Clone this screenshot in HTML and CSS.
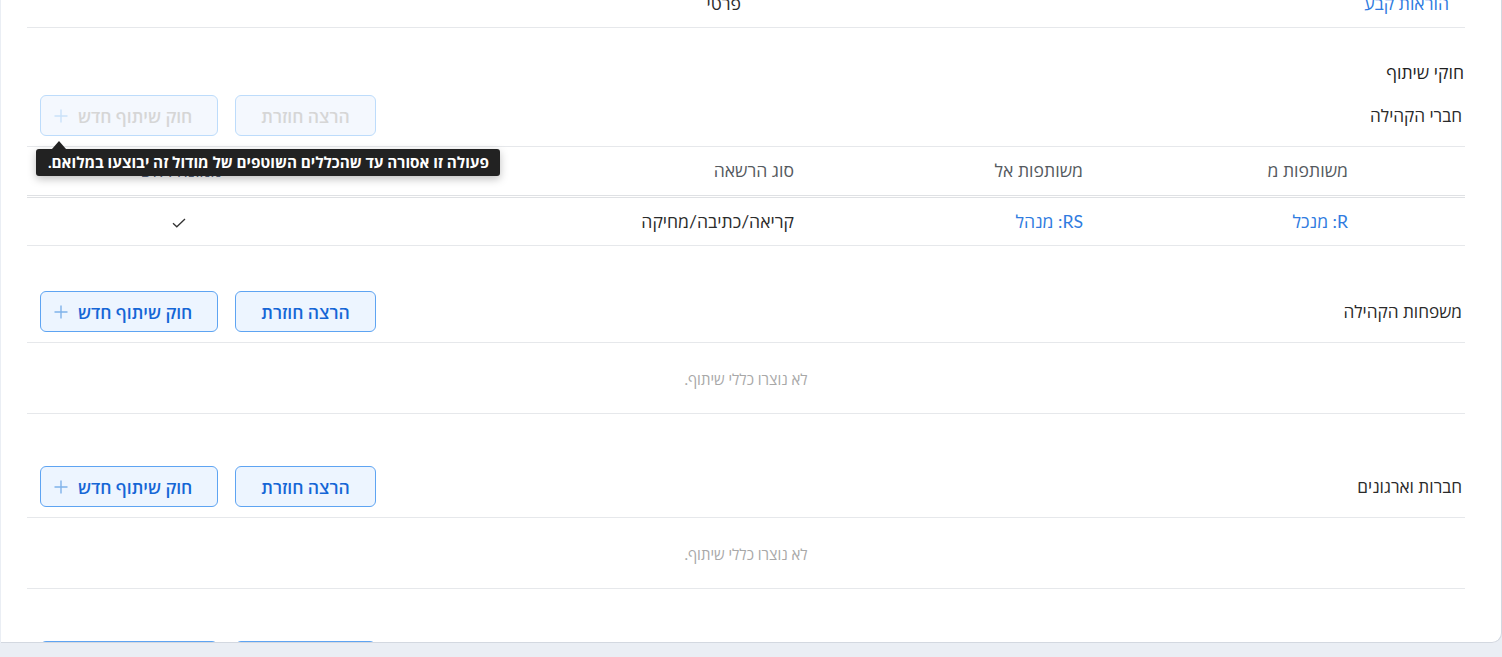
FILE: index.html
```html
<!DOCTYPE html>
<html lang="he" dir="rtl">
<head>
<meta charset="utf-8">
<title>חוקי שיתוף</title>
<link rel="stylesheet" href="styles.css">
</head>
<body>
<div class="card">
  <div class="top-row">
    <div class="top-cell link">הוראות קבע</div>
    <div class="top-cell">פרטי</div>
  </div>

  <h2 class="title">חוקי שיתוף</h2>

  <div class="section-head section-head--first">
    <div class="label">חברי הקהילה</div>
    <div class="actions">
      <button class="btn btn--disabled">הרצה חוזרת</button>
      <div class="btn-wrap">
        <button class="btn btn--add btn--disabled">חוק שיתוף חדש
          <svg class="plus" viewBox="0 0 14 14" width="14" height="14"><path d="M7 0.5V13.5M0.5 7H13.5" fill="none" stroke="currentColor" stroke-width="1.4"/></svg>
        </button>
        <div class="tooltip">פעולה זו אסורה עד שהכללים השוטפים של מודול זה יבוצעו במלואם.</div>
      </div>
    </div>
  </div>

  <div class="table">
    <div class="thead">
      <div class="cell">משותפות מ</div>
      <div class="cell">משותפות אל</div>
      <div class="cell">סוג הרשאה</div>
      <div class="cell cell--center">ממונה ראשי</div>
    </div>
    <div class="trow">
      <div class="cell link">R: מנכל</div>
      <div class="cell link">RS: מנהל</div>
      <div class="cell">קריאה/כתיבה/מחיקה</div>
      <div class="cell cell--center">
        <svg class="check" viewBox="0 0 14 10" width="14" height="10"><path d="M1 5.2L4.8 8.8L13 1" fill="none" stroke="#333" stroke-width="1.3"/></svg>
      </div>
    </div>
  </div>

  <div class="section-head section-head--mid">
    <div class="label">משפחות הקהילה</div>
    <div class="actions">
      <button class="btn">הרצה חוזרת</button>
      <button class="btn btn--add">חוק שיתוף חדש
        <svg class="plus" viewBox="0 0 14 14" width="14" height="14"><path d="M7 0.5V13.5M0.5 7H13.5" fill="none" stroke="currentColor" stroke-width="1.4"/></svg>
      </button>
    </div>
  </div>
  <div class="empty">לא נוצרו כללי שיתוף.</div>

  <div class="section-head">
    <div class="label">חברות וארגונים</div>
    <div class="actions">
      <button class="btn">הרצה חוזרת</button>
      <button class="btn btn--add">חוק שיתוף חדש
        <svg class="plus" viewBox="0 0 14 14" width="14" height="14"><path d="M7 0.5V13.5M0.5 7H13.5" fill="none" stroke="currentColor" stroke-width="1.4"/></svg>
      </button>
    </div>
  </div>
  <div class="empty">לא נוצרו כללי שיתוף.</div>

  <div class="section-head">
    <div class="label">ספקים</div>
    <div class="actions">
      <button class="btn">הרצה חוזרת</button>
      <button class="btn btn--add">חוק שיתוף חדש
        <svg class="plus" viewBox="0 0 14 14" width="14" height="14"><path d="M7 0.5V13.5M0.5 7H13.5" fill="none" stroke="currentColor" stroke-width="1.4"/></svg>
      </button>
    </div>
  </div>
</div>
</body>
</html>
```

FILE: styles.css
```css
* { box-sizing: border-box; }

html, body {
  margin: 0;
  padding: 0;
  background: #eaeef4;
  font-family: Lato, "Open Sans", sans-serif;
  font-size: 17.6px;
  color: #2b2b2b;
}

body {
  height: 657px;
  overflow: hidden;
}

.card {
  width: 1501px;
  height: 643px;
  background: #ffffff;
  border-right: 1px solid #d3d8e0;
  border-bottom: 1px solid #d3d8e0;
  border-bottom-right-radius: 10px;
  overflow: hidden;
  padding: 0 36px 0 26px;
}

.link { color: #2f7be0; }

.top-row {
  display: grid;
  grid-template-columns: 708px 1fr;
  height: 28px;
  border-bottom: 1px solid #e6e8eb;
  align-items: start;
}

.top-cell {
  padding-right: 16px;
  line-height: 24px;
  margin-top: -8px;
}

.title {
  margin: 33px 1px 0 0;
  font-size: 17.6px;
  font-weight: 400;
  line-height: 24px;
  color: #1f1f1f;
}

.section-head {
  display: flex;
  justify-content: space-between;
  align-items: center;
  margin-top: 52px;
  padding: 0 3px 10px 13px;
  border-bottom: 1px solid #e6e8eb;
}

.section-head--first { margin-top: 10px; }
.section-head--mid { margin-top: 45px; }

.label {
  font-size: 17.2px;
  font-weight: 400;
  color: #2a2a2a;
  line-height: 24px;
}

.actions {
  display: flex;
  gap: 17px;
  align-items: center;
}

.btn-wrap { position: relative; }

.btn {
  display: flex;
  align-items: center;
  gap: 10px;
  height: 41px;
  padding: 0 25px;
  border: 1px solid #5ea4f2;
  border-radius: 6px;
  background: #edf5ff;
  color: #1566d6;
  font-family: inherit;
  font-size: 17.5px;
  font-weight: 600;
  cursor: pointer;
}

.btn--add { padding: 0 25px 0 13px; }

.plus { color: #7fb2ea; display: block; }

.btn--disabled {
  background: #f4f8fe;
  border-color: #bddcfb;
  color: #d6d6d6;
  cursor: not-allowed;
}

.btn--disabled .plus { color: #c9e1f9; }

.tooltip {
  position: absolute;
  top: 54px;
  left: -4px;
  width: 464px;
  height: 27px;
  background: #222222;
  color: #ffffff;
  font-size: 15.3px;
  font-weight: 700;
  line-height: 27px;
  padding: 0 11px;
  border-radius: 3px;
  white-space: nowrap;
  box-shadow: 0 3px 8px rgba(0, 0, 0, 0.25);
  z-index: 5;
}

.tooltip::before {
  content: "";
  position: absolute;
  top: -8px;
  left: 16px;
  border-left: 7px solid transparent;
  border-right: 7px solid transparent;
  border-bottom: 8px solid #222222;
}

.thead, .trow {
  display: grid;
  grid-template-columns: 265px 289px 580px 1fr;
  align-items: center;
}

.thead {
  height: 51px;
  border-bottom: 3px double #dfe1e4;
  color: #555a60;
}

.trow {
  height: 48px;
  border-bottom: 1px solid #e6e8eb;
  color: #2b2b2b;
}

.cell {
  padding-right: 117px;
  line-height: 24px;
  white-space: nowrap;
}

.cell--center {
  padding-right: 0;
  text-align: center;
}

.thead .cell--center { color: #55637d; }

.check { display: inline-block; vertical-align: middle; }

.empty {
  height: 71px;
  display: flex;
  align-items: center;
  justify-content: center;
  padding-top: 2px;
  font-size: 15px;
  color: #a8a8a8;
  border-bottom: 1px solid #e6e8eb;
}
```
